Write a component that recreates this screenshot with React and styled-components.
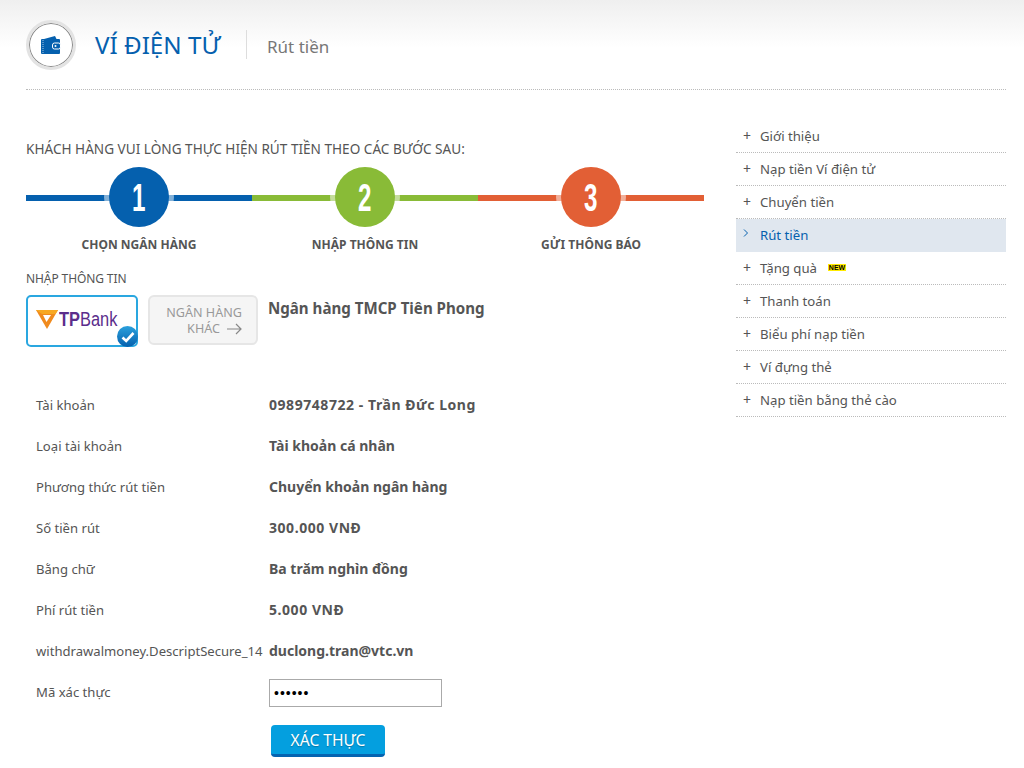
import React from 'react'
import styled, { createGlobalStyle } from 'styled-components'

const GlobalStyle = createGlobalStyle`
  html, body { margin: 0; padding: 0; background: #fff; }
  body { font-family: "Noto Sans", "DejaVu Sans", sans-serif; color: #555; }
  * { box-sizing: border-box; }
`

const STEPS = [
  { n: 1, label: 'CHỌN NGÂN HÀNG', color: '#0560ae' },
  { n: 2, label: 'NHẬP THÔNG TIN', color: '#89bb37' },
  { n: 3, label: 'GỬI THÔNG BÁO', color: '#e25f35' },
]

const ROWS = [
  ['Tài khoản', '0989748722 - Trần Đức Long', true],
  ['Loại tài khoản', 'Tài khoản cá nhân'],
  ['Phương thức rút tiền', 'Chuyển khoản ngân hàng'],
  ['Số tiền rút', '300.000 VNĐ', true],
  ['Bằng chữ', 'Ba trăm nghìn đồng'],
  ['Phí rút tiền', '5.000 VNĐ', true],
  ['withdrawalmoney.DescriptSecure_14', 'duclong.tran@vtc.vn'],
]

const MENU = [
  'Giới thiệu',
  'Nạp tiền Ví điện tử',
  'Chuyển tiền',
  'Rút tiền',
  'Tặng quà',
  'Thanh toán',
  'Biểu phí nạp tiền',
  'Ví đựng thẻ',
  'Nạp tiền bằng thẻ cào',
]

function WalletIcon() {
  return (
    <svg width="20" height="18" viewBox="0 0 20 18">
      <path d="M3 3 L14 0 L15.5 3 Z" fill="#0560ae" />
      <rect x="0" y="3" width="19" height="15" rx="1" fill="#0560ae" />
      <path d="M2 4 V17" stroke="#a8c8e6" strokeWidth="1" strokeDasharray="1 1" />
      <rect x="11.5" y="7" width="8" height="6" rx="2" fill="#0560ae" stroke="#fff" strokeWidth="1" />
      <circle cx="14.5" cy="10" r="1" fill="#fff" />
    </svg>
  )
}

function App() {
  return (
    <Page>
      <GlobalStyle />
      <Header>
        <LogoRing>
          <WalletIcon />
        </LogoRing>
        <Title>VÍ ĐIỆN TỬ</Title>
        <SubTitle>Rút tiền</SubTitle>
      </Header>
      <Columns>
        <Main>
          <Intro>KHÁCH HÀNG VUI LÒNG THỰC HIỆN RÚT TIỀN THEO CÁC BƯỚC SAU:</Intro>
          <Steps>
            {STEPS.map((s) => (
              <Step key={s.n} $color={s.color}>
                <Circle $color={s.color}><Digit>{s.n}</Digit></Circle>
                <StepLabel>{s.label}</StepLabel>
              </Step>
            ))}
          </Steps>
          <SectionLabel>NHẬP THÔNG TIN</SectionLabel>
          <BankRow>
            <TpCard>
              <svg width="22" height="19" viewBox="0 0 22 19">
                <path d="M0 0 H22 L11 19 Z" fill="#f08a1d" />
                <path d="M0 0 H22 L19.5 4 H6 Z" fill="#f7a823" />
                <path d="M7 5 L15 5 L10.5 12 Z" fill="#fff" />
              </svg>
              <TpName><b>TP</b>Bank</TpName>
              <CheckBadge>
                <svg width="14" height="12" viewBox="0 0 14 12">
                  <path d="M1.5 6.5 L5.2 10 L12.5 2" fill="none" stroke="#fff" strokeWidth="2.6" />
                </svg>
              </CheckBadge>
            </TpCard>
            <OtherCard>
              <span>NGÂN HÀNG</span>
              <span>
                KHÁC
                <svg width="15" height="12" viewBox="0 0 15 12">
                  <path d="M0 6 H14 M9 1 L14 6 L9 11" fill="none" stroke="#888" strokeWidth="1.2" />
                </svg>
              </span>
            </OtherCard>
            <BankName>Ngân hàng TMCP Tiên Phong</BankName>
          </BankRow>
          <InfoList>
            {ROWS.map(([k, v, numeric]) => (
              <InfoRow key={k}>
                <InfoKey>{k}</InfoKey>
                <InfoValue $numeric={numeric}>{v}</InfoValue>
              </InfoRow>
            ))}
            <InfoRow>
              <InfoKey>Mã xác thực</InfoKey>
              <CodeInput type="password" defaultValue="123456" readOnly />
            </InfoRow>
          </InfoList>
          <SubmitButton>XÁC THỰC</SubmitButton>
        </Main>
        <Side>
          {MENU.map((m) => (
            <MenuItem key={m} $active={m === 'Rút tiền'}>
              <Marker $active={m === 'Rút tiền'}>
                {m === 'Rút tiền' ? (
                  <svg width="6" height="8" viewBox="0 0 6 8">
                    <path d="M1 0.5 L4.5 4 L1 7.5" fill="none" stroke="#0560ae" strokeWidth="1" />
                  </svg>
                ) : '+'}
              </Marker>
              {m}
              {m === 'Tặng quà' && <NewTag>NEW</NewTag>}
            </MenuItem>
          ))}
        </Side>
      </Columns>
    </Page>
  )
}

const Page = styled.div`
  width: 1024px;
  height: 768px;
  overflow: hidden;
  padding: 0 18px 0 26px;
  background: linear-gradient(#efefef 0, #fff 48px);
`

const Header = styled.header`
  display: flex;
  align-items: center;
  height: 90px;
  border-bottom: 1px dotted #bbb;
`

const LogoRing = styled.div`
  width: 50px;
  height: 50px;
  border-radius: 50%;
  background: #fff;
  border: 3px solid #e3e3e3;
  box-shadow: inset 0 0 0 1px #8a8a8a;
  display: flex;
  align-items: center;
  justify-content: center;
`

const Title = styled.h1`
  margin: 0 0 0 19px;
  width: 152px;
  height: 29px;
  line-height: 29px;
  font-size: 24.2px;
  font-weight: 400;
  color: #0560ae;
  border-right: 1px solid #ddd;
`

const SubTitle = styled.span`
  margin: 4px 0 0 20px;
  font-size: 17px;
  color: #777;
`

const Columns = styled.div`
  display: flex;
  gap: 32px;
`

const Main = styled.main`
  width: 678px;
  padding-top: 50px;
`

const Intro = styled.p`
  margin: 0;
  height: 18px;
  line-height: 18px;
  font-size: 13.6px;
`

const Steps = styled.div`
  display: grid;
  grid-template-columns: repeat(3, 226px);
  margin-top: 9px;
`

const Step = styled.div`
  display: flex;
  flex-direction: column;
  align-items: center;
  background: linear-gradient(${(p) => p.$color}, ${(p) => p.$color}) 0 28px / 100% 6px no-repeat;
`

const Circle = styled.div`
  width: 60px;
  height: 60px;
  border-radius: 50%;
  background: ${(p) => p.$color};
  box-shadow: 0 0 0 5px rgba(255, 255, 255, 0.5);
  display: flex;
  align-items: center;
  justify-content: center;
`

const Digit = styled.span`
  color: #fff;
  font-family: "Liberation Sans", sans-serif;
  font-size: 39px;
  line-height: 44px;
  font-weight: 700;
  margin-top: 2px;
  transform: scaleX(0.62);
`

const StepLabel = styled.div`
  margin-top: 9px;
  font-size: 12px;
  line-height: 18px;
  font-weight: 700;
`

const SectionLabel = styled.div`
  margin-top: 16px;
  font-size: 12px;
  line-height: 18px;
  letter-spacing: -0.1px;
`

const BankRow = styled.div`
  display: flex;
  align-items: flex-start;
  margin-top: 7px;
`

const TpCard = styled.div`
  position: relative;
  width: 112px;
  height: 52px;
  border: 2px solid #2aa7e0;
  border-radius: 5px;
  display: flex;
  align-items: center;
  padding: 0 0 3px 8px;
  gap: 1px;
`

const TpName = styled.span`
  font-family: "Liberation Sans", sans-serif;
  font-size: 20px;
  color: #5b2d8c;
  transform: scaleX(0.82);
  transform-origin: left center;
  white-space: nowrap;
  b { font-weight: 700; }
`

const CheckBadge = styled.span`
  position: absolute;
  right: -2px;
  bottom: -2px;
  width: 21px;
  height: 21px;
  border-radius: 50%;
  background: linear-gradient(#2aa0dc, #0560ae);
  display: flex;
  align-items: center;
  justify-content: center;
`

const OtherCard = styled.div`
  width: 110px;
  height: 50px;
  margin-left: 10px;
  border: 2px solid #e6e6e6;
  border-radius: 6px;
  background: #f5f5f5;
  padding: 8px 14px 0 0;
  display: flex;
  flex-direction: column;
  align-items: flex-end;
  font-size: 12.6px;
  line-height: 16px;
  color: #999;
  span { display: flex; align-items: center; gap: 7px; }
`

const BankName = styled.div`
  margin-left: 10px;
  font-size: 15.1px;
  font-weight: 700;
  line-height: 26px;
`

const InfoList = styled.div`
  margin-top: 37px;
  padding-left: 10px;
`

const InfoRow = styled.div`
  display: flex;
  align-items: flex-start;
  height: 41px;
  padding-top: 12px;
  line-height: 18px;
`

const InfoKey = styled.div`
  width: 233px;
  font-size: 13.1px;
  white-space: nowrap;
`

const InfoValue = styled.div`
  font-size: 14px;
  font-weight: 700;
  letter-spacing: ${(p) => (p.$numeric ? '0.55px' : '0')};
`

const CodeInput = styled.input`
  width: 173px;
  height: 28px;
  margin-top: -4px;
  border: 1px solid #aaa;
  padding: 0 4px;
  font-size: 14px;
  letter-spacing: 1px;
  outline: none;
`

const SubmitButton = styled.button`
  display: block;
  width: 114px;
  height: 32px;
  margin: 13px 0 0 245px;
  border: 0;
  border-bottom: 3px solid #0563b0;
  border-radius: 4px;
  background: #049fdf;
  color: #fff;
  font-family: "Noto Sans", sans-serif;
  font-size: 15.6px;
  padding: 0;
  text-shadow: 0 1px 1px rgba(0, 0, 0, 0.25);
`

const Side = styled.nav`
  width: 270px;
  padding-top: 30px;
`

const MenuItem = styled.div`
  display: flex;
  align-items: center;
  height: 33px;
  padding-bottom: ${(p) => (p.$active ? '2px' : '1px')};
  font-size: 13.2px;
  color: ${(p) => (p.$active ? '#0560ae' : '#555')};
  background: ${(p) => (p.$active ? '#e0e7ef' : 'transparent')};
  border-bottom: ${(p) => (p.$active ? '0' : '1px dotted #bbb')};
`

const Marker = styled.span`
  width: 24px;
  padding-left: 7px;
  font-size: 14px;
  line-height: 1;
  margin-top: ${(p) => (p.$active ? '-5px' : '0')};
`

const NewTag = styled.span`
  margin-left: 11px;
  width: 18px;
  height: 7px;
  background: #ffeb00;
  color: #000;
  font-family: "Liberation Sans", sans-serif;
  font-size: 7px;
  font-weight: 700;
  line-height: 7px;
  text-align: center;
`

export default App
